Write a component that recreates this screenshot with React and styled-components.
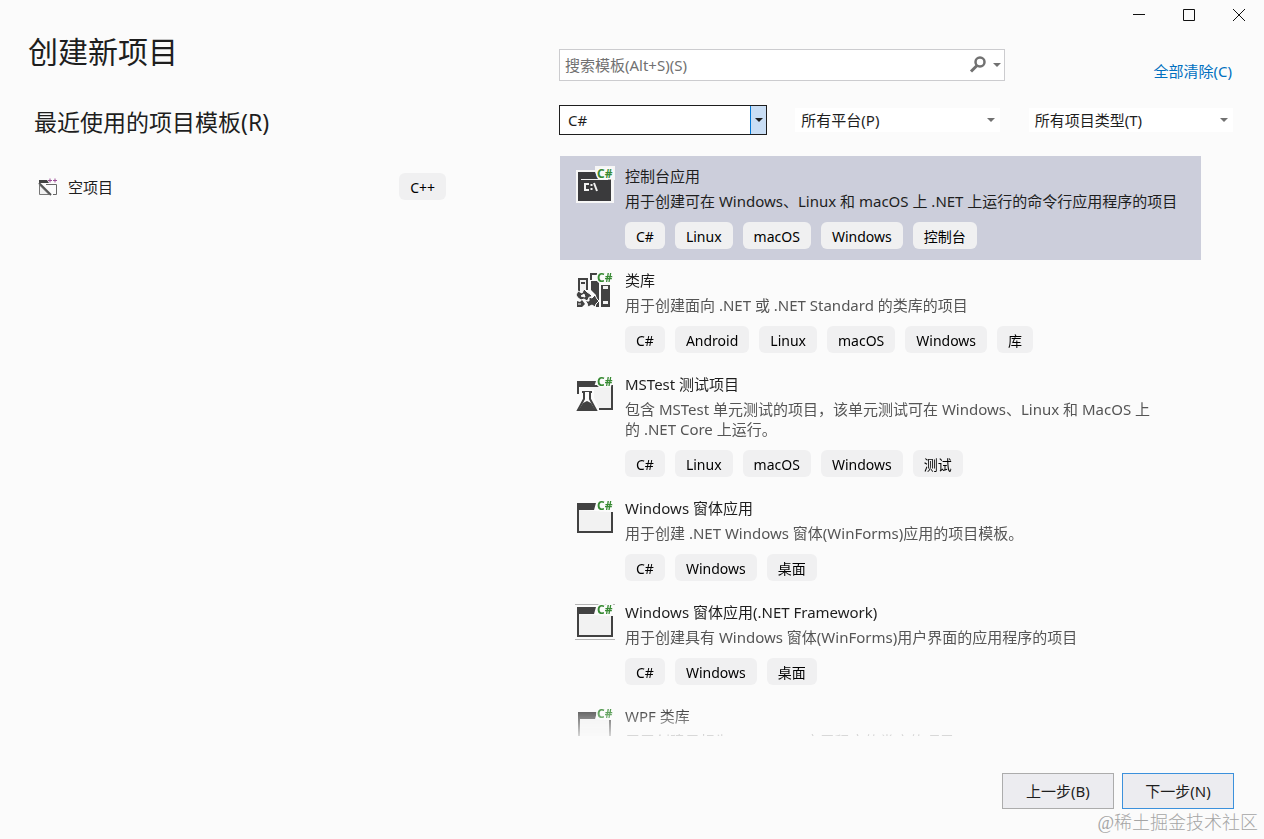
import React, { useState } from 'react';
import styled, { createGlobalStyle } from 'styled-components';

const templates = [
  {
    icon: 'console',
    name: '控制台应用',
    description: '用于创建可在 Windows、Linux 和 macOS 上 .NET 上运行的命令行应用程序的项目',
    tags: ['C#', 'Linux', 'macOS', 'Windows', '控制台'],
  },
  {
    icon: 'library',
    name: '类库',
    description: '用于创建面向 .NET 或 .NET Standard 的类库的项目',
    tags: ['C#', 'Android', 'Linux', 'macOS', 'Windows', '库'],
  },
  {
    icon: 'test',
    name: 'MSTest 测试项目',
    description: '包含 MSTest 单元测试的项目，该单元测试可在 Windows、Linux 和 MacOS 上\n的 .NET Core 上运行。',
    tags: ['C#', 'Linux', 'macOS', 'Windows', '测试'],
  },
  {
    icon: 'form',
    name: 'Windows 窗体应用',
    description: '用于创建 .NET Windows 窗体(WinForms)应用的项目模板。',
    tags: ['C#', 'Windows', '桌面'],
  },
  {
    icon: 'framework',
    name: 'Windows 窗体应用(.NET Framework)',
    description: '用于创建具有 Windows 窗体(WinForms)用户界面的应用程序的项目',
    tags: ['C#', 'Windows', '桌面'],
  },
  {
    icon: 'wpf',
    name: 'WPF 类库',
    description: '用于创建目标为 .NET WPF 应用程序的类库的项目',
    tags: [],
  },
];

const FormDrawing = () => (
  <>
    <path d="M3 12V34H37V14" fill="#f2f2f2" stroke="#424242" strokeWidth="2" />
    <path d="M2 5H21L19 12H2Z" fill="#424242" />
  </>
);

const drawings = {
  console: (
    <>
      <path d="M1 4H20V0H40V14H39V37H1Z" fill="#f6f6f6" />
      <path d="M3 6H20L23 13H36V35H3Z" fill="#3a3a3c" />
      <path d="M6 13.5H33" stroke="#f0f0f0" />
      <path
        d="M14 18H10V24H14M16.5 18V20M16.5 22V24M19 17L22 25"
        fill="none"
        stroke="#f0f0f0"
        strokeWidth="2"
      />
    </>
  ),
  library: (
    <>
      <path d="M4 22V9H12V20" fill="#f2f2f2" stroke="#424242" strokeWidth="2" />
      <path d="M6 13H10" stroke="#424242" strokeWidth="2" />
      <path d="M16 10V4H22" fill="none" stroke="#424242" strokeWidth="2" />
      <path d="M16 11H24V37H21V25L16 20Z" fill="#424242" />
      <path d="M26 15H35V37H26Z" fill="#424242" />
      <path d="M28 16H33V19H28ZM28 31H33V34H28Z" fill="#f2f2f2" />
      <path
        d="M3 21L7 23L9 19L12 22L15 24L17 26L14 28L12 31L9 29L6 30L3 28L1 25Z"
        fill="#424242"
        stroke="#fbfbfb"
      />
      <path
        d="M14 27L17 28L20 25L22 29L24 31L21 34L20 37L17 35L13 37L12 33L10 31L14 31Z"
        fill="#424242"
        stroke="#fbfbfb"
      />
      <path d="M2 31L5 32L7 30L10 34L7 37H2Z" fill="#424242" />
      <path d="M6 26L9 24L10 27ZM3 34H6" fill="#fbfbfb" stroke="#fbfbfb" />
    </>
  ),
  test: (
    <>
      <path d="M14 12H37V35H24" fill="#f2f2f2" stroke="#424242" strokeWidth="2" />
      <path d="M2 7H21L19 13H4V20H2Z" fill="#424242" />
      <path d="M4 16H19V24L25 38H1L6 23Z" fill="#fbfbfb" />
      <path d="M7 18H17" stroke="#424242" strokeWidth="2" />
      <path d="M9 18V25L3 36H21L15 25V18" fill="#fbfbfb" stroke="#424242" strokeWidth="2" />
      <path d="M8 29L12 27L16 29L21 37H3Z" fill="#424242" />
    </>
  ),
  form: <FormDrawing />,
  framework: (
    <>
      <path d="M0 2.5H40M0 37.5H40" stroke="#b4b4b4" />
      <FormDrawing />
    </>
  ),
  wpf: (
    <>
      <path d="M4 12V34H35V14" fill="#f2f2f2" stroke="#424242" strokeWidth="2" />
      <path d="M3 6H22L20 13H3Z" fill="#424242" />
    </>
  ),
};

const TemplateIcon = ({ kind }) => (
  <IconSvg viewBox="0 0 40 40" aria-hidden="true">
    {drawings[kind]}
    <text x="22" y="12">C#</text>
  </IconSvg>
);

const Filter = ({ label, active, options }) => (
  <FilterBox $active={active}>
    <select aria-label={label}>
      {options.map((o) => (
        <option key={o}>{o}</option>
      ))}
    </select>
    <span className="arrow">
      <Caret />
    </span>
  </FilterBox>
);

const Caret = () => (
  <svg width="8" height="4" viewBox="0 0 8 4" aria-hidden="true">
    <path d="M0 0H8L4 4Z" fill="currentColor" />
  </svg>
);

const App = () => {
  const [selected, setSelected] = useState(0);

  return (
    <>
      <GlobalStyle />
      <Page>
        <TitleBar>
          <button type="button" aria-label="最小化">
            <svg width="14" height="14" viewBox="0 0 14 14">
              <path d="M1 6.5H13" stroke="#111" />
            </svg>
          </button>
          <button type="button" aria-label="最大化">
            <svg width="14" height="14" viewBox="0 0 14 14">
              <path d="M1.5 1.5H12.5V12.5H1.5Z" fill="none" stroke="#111" />
            </svg>
          </button>
          <button type="button" aria-label="关闭">
            <svg width="14" height="14" viewBox="0 0 14 14">
              <path d="M1 1L13 13M13 1L1 13" stroke="#111" />
            </svg>
          </button>
        </TitleBar>

        <Main>
          <Recent>
            <h1>创建新项目</h1>
            <h2>最近使用的项目模板(R)</h2>
            <RecentItem>
              <svg width="20" height="20" viewBox="0 0 20 20" aria-hidden="true">
                <path d="M1 3H9L11 6H1Z" fill="#424242" />
                <path d="M10 3.5H14M12 1.5V5.5M15 3.5H19M17 1.5V5.5" stroke="#9b4f96" />
                <path d="M8 7.5H18.5V17.5H15" fill="none" stroke="#666" />
                <path d="M1.5 8V17.5H11Z" fill="#f2f2f2" stroke="#777" />
                <path d="M1 6L13 18" stroke="#555" strokeWidth="2" />
              </svg>
              <span className="name">空项目</span>
              <Tag>C++</Tag>
            </RecentItem>
          </Recent>

          <Templates>
            <SearchRow>
              <SearchBox>
                <input type="text" aria-label="搜索模板" placeholder="搜索模板(Alt+S)(S)" />
                <button type="button" aria-label="搜索">
                  <svg width="18" height="18" viewBox="0 0 18 18">
                    <circle cx="11" cy="6" r="4.5" fill="none" stroke="#717171" strokeWidth="2.5" />
                    <path d="M8 9.5L2 15.5" stroke="#717171" strokeWidth="3" />
                  </svg>
                </button>
                <button type="button" aria-label="搜索选项">
                  <Caret />
                </button>
              </SearchBox>
              <a href="#clear">全部清除(C)</a>
            </SearchRow>

            <Filters>
              <Filter label="语言" active options={['C#', 'C++']} />
              <Filter label="平台" options={['所有平台(P)', 'Windows', 'Linux']} />
              <Filter label="项目类型" options={['所有项目类型(T)', '控制台', '桌面']} />
            </Filters>

            <TemplateList role="listbox" aria-label="项目模板">
              {templates.map((t, index) => (
                <TemplateItem
                  key={t.name}
                  role="option"
                  aria-selected={index === selected}
                  $selected={index === selected}
                  onClick={() => setSelected(index)}
                >
                  <TemplateIcon kind={t.icon} />
                  <div>
                    <div className="name">{t.name}</div>
                    <div className="description">{t.description}</div>
                    <Tags>
                      {t.tags.map((tag) => (
                        <Tag key={tag}>{tag}</Tag>
                      ))}
                    </Tags>
                  </div>
                </TemplateItem>
              ))}
            </TemplateList>
          </Templates>
        </Main>

        <Footer>
          <StepButton type="button">上一步(B)</StepButton>
          <StepButton type="button" $primary>下一步(N)</StepButton>
        </Footer>
        <Watermark>@稀土掘金技术社区</Watermark>
      </Page>
    </>
  );
};

export default App;

const GlobalStyle = createGlobalStyle`
  * {
    box-sizing: border-box;
  }

  body {
    margin: 0;
    background: #fbfbfb;
  }

  body, button, input, select {
    font-family: 'Noto Sans', 'Noto Sans CJK SC', sans-serif;
    font-size: 15px;
    line-height: 20px;
    color: #1e1e1e;
  }
`;

const Page = styled.div`
  position: relative;
  display: flex;
  flex-direction: column;
  height: 100vh;
`;

const TitleBar = styled.header`
  display: flex;
  justify-content: flex-end;
  height: 30px;

  button {
    display: flex;
    align-items: center;
    justify-content: center;
    width: 50px;
    padding: 0;
    border: 0;
    background: none;
  }
`;

const Main = styled.main`
  flex: 1;
  min-height: 0;
  display: grid;
  grid-template-columns: 418fr 675fr;
  grid-template-rows: minmax(0, 1fr);
  column-gap: 113px;
  padding: 0 30px 0 28px;
`;

const Recent = styled.section`
  h1 {
    margin: 0;
    font-size: 30px;
    line-height: 44px;
    font-weight: 400;
  }

  h2 {
    margin: 32px 0 0 6px;
    font-size: 23px;
    line-height: 32px;
    font-weight: 400;
  }
`;

const RecentItem = styled.div`
  display: flex;
  align-items: center;
  gap: 10px;
  margin-top: 35px;
  padding-left: 10px;

  .name {
    flex: 1;
    font-size: 15px;
  }
`;

const Tag = styled.span`
  height: 27px;
  padding: 0 11px;
  border-radius: 6px;
  background: #f0f0f1;
  font-size: 14px;
  line-height: 29px;
  color: #000;
`;

const Tags = styled.div`
  display: flex;
  gap: 10px;
  margin-top: 11px;
`;

const Templates = styled.section`
  display: flex;
  flex-direction: column;
  min-width: 0;
  padding-top: 19px;
`;

const SearchRow = styled.div`
  display: flex;
  align-items: flex-end;
  justify-content: space-between;

  a {
    padding-right: 2px;
    color: #0070c0;
    text-decoration: none;
  }
`;

const SearchBox = styled.div`
  display: flex;
  align-items: center;
  width: 66%;
  height: 32px;
  border: 1px solid #cccccf;
  background: #fff;

  input {
    flex: 1;
    min-width: 0;
    padding: 0 5px;
    border: 0;
    outline: 0;
    background: none;
  }

  input::placeholder {
    color: #717171;
    opacity: 1;
  }

  button {
    display: flex;
    padding: 0 3px;
    border: 0;
    background: none;
    color: #717171;
  }
`;

const Filters = styled.div`
  display: grid;
  grid-template-columns: repeat(3, 1fr);
  gap: 25px;
  margin-top: 24px;
`;

const FilterBox = styled.div`
  display: flex;
  height: 30px;
  border: ${(p) => (p.$active ? '1px solid #1e1e1e' : '3px solid transparent')};
  border-right-width: 1px;
  padding-left: ${(p) => (p.$active ? '8px' : '6px')};
  background: #fff;
  background-clip: padding-box;

  select {
    flex: 1;
    min-width: 0;
    padding: 0;
    border: 0;
    outline: 0;
    appearance: none;
    background: none;
  }

  .arrow {
    display: flex;
    align-items: center;
    justify-content: center;
    width: ${(p) => (p.$active ? '16px' : '18px')};
    color: ${(p) => (p.$active ? '#1e1e1e' : '#717171')};
    background: ${(p) => (p.$active ? '#c9def5' : 'none')};
    border-left: ${(p) => (p.$active ? '1px solid #0078d7' : '0')};
  }
`;

const TemplateList = styled.ul`
  flex: 1;
  min-height: 0;
  margin: 21px 33px 0 1px;
  padding: 0;
  overflow: hidden;
  list-style: none;
  mask-image: linear-gradient(#000 calc(100% - 32px), rgba(0, 0, 0, 0.2));
`;

const TemplateItem = styled.li`
  display: flex;
  gap: 10px;
  padding: 10px 8px 11px 15px;
  background: ${(p) => (p.$selected ? '#cccedb' : 'transparent')};

  .description {
    margin-top: 5px;
    white-space: pre-line;
    color: ${(p) => (p.$selected ? '#1e1e1e' : '#555')};
  }
`;

const IconSvg = styled.svg`
  flex: none;
  width: 40px;
  height: 40px;
  overflow: visible;

  text {
    font-family: 'Noto Sans', sans-serif;
    font-size: 12px;
    font-weight: 700;
    fill: #388a34;
    stroke: #fbfbfb;
    stroke-width: 3px;
    paint-order: stroke;
  }
`;

const Footer = styled.footer`
  display: flex;
  justify-content: flex-end;
  gap: 8px;
  padding: 37px 30px 30px;
`;

const StepButton = styled.button`
  width: 112px;
  height: 36px;
  padding: 0;
  border: 1px solid ${(p) => (p.$primary ? '#3c91dc' : '#acacac')};
  background: #ececf0;
`;

const Watermark = styled.div`
  position: absolute;
  right: 6px;
  bottom: 4px;
  font-family: 'Liberation Serif', 'Noto Sans CJK SC', serif;
  font-size: 18px;
  font-weight: 300;
  line-height: 24px;
  color: #a5a5a5;
`;
